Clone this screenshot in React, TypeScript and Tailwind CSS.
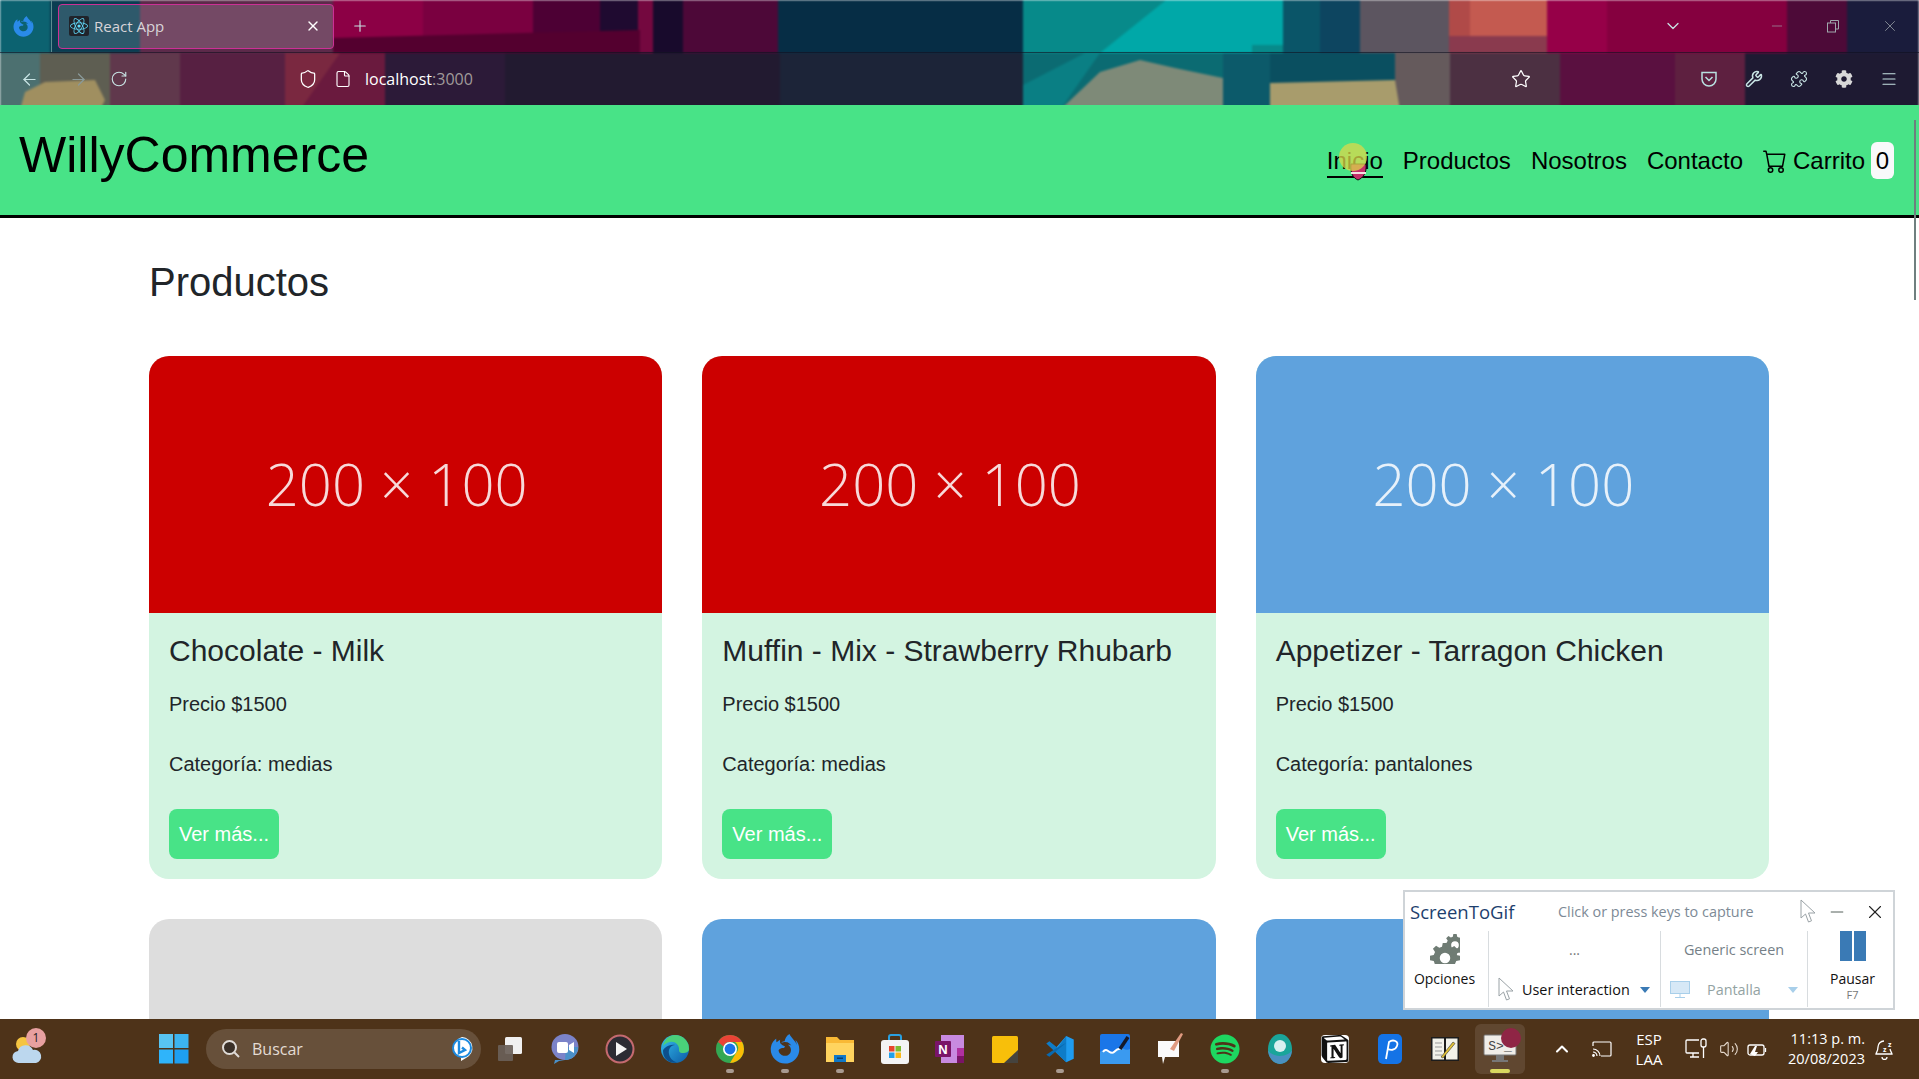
import { useId } from "react";
import { FaReact, FaCog, FaSpotify, FaFirefoxBrowser } from "react-icons/fa";
import { BsCart } from "react-icons/bs";
import { SiNotion } from "react-icons/si";
import {
  ArrowLeft,
  ArrowRight,
  ChevronDown,
  ChevronUp,
  File,
  Menu,
  Minus,
  Plus,
  RotateCw,
  Shield,
  Star,
  Volume2,
  Wrench,
  X,
  Puzzle,
} from "lucide-react";

type Product = { title: string; category: string; color: string };

const PRODUCTS: Product[] = [
  { title: "Chocolate - Milk", category: "medias", color: "bg-[#cc0000]" },
  { title: "Muffin - Mix - Strawberry Rhubarb", category: "medias", color: "bg-[#cc0000]" },
  { title: "Appetizer - Tarragon Chicken", category: "pantalones", color: "bg-[#5fa2dd]" },
];

const NEXT_ROW = ["bg-[#dddddd]", "bg-[#5fa2dd]", "bg-[#5fa2dd]"];

// Wallpaper behind the browser chrome, blocked out by hand: [x, y, w, h, colour]
const PAINT: [number, number, number, number, string][] = [
  [0, 0, 50, 53, "#0c6270"],
  [50, 0, 90, 53, "#0a3d52"],
  [140, 0, 200, 53, "#5c2a4a"],
  [333, 0, 90, 53, "#8c0045"],
  [423, 0, 110, 53, "#7a0040"],
  [533, 0, 100, 53, "#4d0034"],
  [600, 0, 40, 53, "#1f0a30"],
  [638, 0, 15, 53, "#74083f"],
  [653, 0, 30, 53, "#180a2c"],
  [683, 0, 95, 53, "#4d0838"],
  [778, 0, 245, 53, "#062d45"],
  [1023, 0, 260, 53, "#078a8a"],
  [1283, 0, 37, 53, "#0a5568"],
  [1320, 0, 40, 53, "#0d4560"],
  [1360, 0, 90, 53, "#5c5560"],
  [1449, 36, 98, 17, "#8a3a4e"],
  [1449, 0, 98, 36, "#c45a50"],
  [1547, 0, 60, 53, "#960048"],
  [1607, 0, 180, 53, "#85003f"],
  [1787, 0, 60, 53, "#4d0a38"],
  [1847, 0, 72, 53, "#1a1c3c"],
  [0, 53, 40, 57, "#4c7070"],
  [40, 53, 70, 57, "#5e5e52"],
  [110, 53, 70, 57, "#60384c"],
  [180, 53, 105, 57, "#572042"],
  [285, 53, 100, 57, "#6a1a3e"],
  [385, 53, 120, 57, "#2c1a38"],
  [505, 53, 275, 57, "#221a30"],
  [780, 53, 243, 57, "#1c2438"],
  [1023, 53, 200, 57, "#0b6b72"],
  [1223, 53, 47, 57, "#0c5a6a"],
  [1270, 53, 125, 30, "#0a4f60"],
  [1395, 53, 55, 57, "#655a5c"],
  [1450, 53, 110, 57, "#4c3042"],
  [1560, 53, 115, 57, "#5a1040"],
  [1675, 53, 70, 57, "#5e2040"],
  [1745, 53, 174, 57, "#1e1a32"],
];

// Irregular strokes laid over the blocks: [points, colour]
const STROKES: [string, string][] = [
  ["1100,53 1166,0 1283,0 1283,45 1252,45 1252,53", "#00a8a8"],
  ["1060,110 1100,72 1140,60 1175,68 1223,78 1223,110", "#7e8a78"],
  ["1023,110 1023,85 1085,53 1100,53 1060,110", "#0a7f84"],
  ["1270,83 1395,80 1400,110 1270,110", "#a89c6c"],
  ["25,92 45,82 95,80 105,100 100,110 20,110", "#a08f60"],
  ["333,38 640,30 640,53 333,53", "#54002f"],
  ["1449,0 1470,0 1470,36 1449,36", "#b04a48"],
  ["285,53 340,53 300,110 285,110", "#7a2840"],
];

function Wallpaper() {
  return (
    <svg className="absolute left-0 top-0 blur-[1px]" width="1919" height="110" viewBox="0 0 1919 110">
      {PAINT.map(([x, y, w, h, c], i) => (
        <rect key={i} x={x} y={y} width={w} height={h} fill={c} />
      ))}
      {STROKES.map(([points, c], i) => (
        <polygon key={i} points={points} fill={c} />
      ))}
    </svg>
  );
}

function ProductCard({ product }: { product: Product }) {
  return (
    <div className="overflow-hidden rounded-[20px] bg-[#d3f4e1]">
      <div className={`flex h-[257px] items-center justify-center pb-[2px] pr-[18px] ${product.color}`}>
        <span className="font-['Open_Sans'] text-[58px] font-light text-white/85">200 × 100</span>
      </div>
      <div className="p-5">
        <h4 className="mb-[20px] text-[30px] leading-[36px] text-[#212529]">{product.title}</h4>
        <p className="mb-[30px] text-[20px] leading-[30px] text-[#212529]">Precio $1500</p>
        <p className="mb-[30px] text-[20px] leading-[30px] text-[#212529]">Categoría: {product.category}</p>
        <button className="h-[50px] w-[110px] rounded-[8px] bg-[#48e387] text-[20px] text-white">Ver más...</button>
      </div>
    </div>
  );
}

function Navbar() {
  return (
    <nav className="flex h-[113px] items-center justify-between border-b-[3px] border-black bg-[#48e387] pl-[19px] pr-[25px] text-black">
      <span className="mb-[10px] text-[50px] leading-[60px]">WillyCommerce</span>
      <div className="mt-[1px] flex items-center gap-5 text-[24px] leading-[36px]">
        <a className="mt-[2px] border-b-2 border-black leading-[30px]">Inicio</a>
        <a>Productos</a>
        <a>Nosotros</a>
        <a>Contacto</a>
        <a className="flex items-center">
          <BsCart className="mr-[6px] h-[24px] w-[24px]" />
          Carrito
          <span className="ml-[6px] flex h-[37px] w-[23px] items-center justify-center rounded-[6px] bg-[#f8f9fa]">0</span>
        </a>
      </div>
    </nav>
  );
}

function BrowserChrome() {
  const icon = "text-[#c8e4e4]";
  return (
    <header className="relative h-[105px] shrink-0 overflow-hidden font-['Open_Sans']">
      <Wallpaper />
      <div className="relative flex h-[53px] items-center border-b border-[#10101f]/60">
        <div className="flex h-full w-[52px] items-center justify-center border-r border-[#5c8c90] pr-[5px]">
          <FaFirefoxBrowser className="h-[21px] w-[21px] text-[#2a8ae8]" />
        </div>
        <div className="ml-[6px] flex h-[45px] w-[276px] items-center rounded-[4px] border border-[#cc3096] bg-white/15 pl-[10px] pr-[12px]">
          <span className="flex h-[20px] w-[20px] items-center justify-center rounded-[2px] bg-[#20232a]">
            <FaReact className="h-[18px] w-[18px] text-[#61dafb]" />
          </span>
          <span className="ml-[5px] flex-1 text-[15px] text-[#d8d4d8]">React App</span>
          <X className="h-[16px] w-[16px] text-white" strokeWidth={2} />
        </div>
        <Plus className={`ml-[17px] h-[18px] w-[18px] ${icon}`} strokeWidth={1.5} />
        <ChevronDown className={`ml-[1294px] h-[20px] w-[20px] ${icon}`} strokeWidth={1.5} />
        <Minus className="ml-[86px] h-[16px] w-[16px] text-[#a0a8ac]" strokeWidth={1} />
        <svg className="ml-[41px]" width="14" height="14" viewBox="0 0 14 14" fill="none" stroke="#a0a8ac">
          <rect x="1.5" y="4" width="8" height="9" />
          <path d="M4.5 4V1.5h8V10H9.5" />
        </svg>
        <X className="ml-[41px] h-[18px] w-[18px] text-[#a0a8ac]" strokeWidth={1} />
      </div>
      <div className="relative flex h-[52px] items-center">
        <ArrowLeft className={`ml-[20px] h-[19px] w-[19px] ${icon}`} strokeWidth={1.5} />
        <ArrowRight className="ml-[30px] h-[19px] w-[19px] text-[#8a9a9a]" strokeWidth={1.5} />
        <RotateCw className={`ml-[22px] h-[18px] w-[18px] ${icon}`} strokeWidth={1.5} />
        <Shield className="ml-[170px] h-[20px] w-[20px] text-white" strokeWidth={1.5} />
        <File className="ml-[16px] h-[18px] w-[18px] text-white" strokeWidth={1.5} />
        <span className="ml-[13px] text-[16px] text-white">
          localhost<span className="text-[#a09a9a]">:3000</span>
        </span>
        <Star className="ml-[1038px] h-[20px] w-[20px] text-white" strokeWidth={1.5} />
        <svg className="ml-[169px]" width="18" height="18" viewBox="0 0 18 18" fill="none" stroke="#b8e0e0" strokeWidth="1.5">
          <path d="M2 2.5h14V9a7 7 0 0 1-14 0z" />
          <path d="M5.5 7 9 10.5 12.5 7" />
        </svg>
        <Wrench className="ml-[27px] h-[18px] w-[18px] text-[#c8e4e4]" strokeWidth={2} />
        <Puzzle className={`ml-[27px] h-[18px] w-[18px] ${icon}`} strokeWidth={1.5} />
        <FaCog className="ml-[27px] h-[18px] w-[18px] text-[#d8d8d8]" />
        <Menu className={`ml-[27px] h-[18px] w-[18px] ${icon}`} strokeWidth={1.5} />
      </div>
    </header>
  );
}

function Cell({ children, dot }: { children: React.ReactNode; dot?: boolean }) {
  return (
    <div className="relative flex h-[59px] w-[55px] items-center justify-center">
      {children}
      {dot && <span className="absolute bottom-[6px] h-[4px] w-[8px] rounded-full bg-[#a89a90]" />}
    </div>
  );
}

function ChromeIcon() {
  return (
    <svg width="30" height="30" viewBox="0 0 30 30">
      <circle cx="15" cy="15" r="14" fill="#34a853" />
      <path d="M15 1a14 14 0 0 1 12.1 7H15a7 7 0 0 0-6.5 4.4L3 8A14 14 0 0 1 15 1z" fill="#ea4335" />
      <path d="M27.1 8A14 14 0 0 1 15 29l6-10a7 7 0 0 0-1-11z" fill="#fbbc05" />
      <circle cx="15" cy="15" r="7" fill="#fff" />
      <circle cx="15" cy="15" r="5.4" fill="#1a73e8" />
    </svg>
  );
}

function EdgeIcon() {
  const id = useId();
  return (
    <svg width="30" height="30" viewBox="0 0 30 30">
      <defs>
        <linearGradient id={id} x1="0" y1="0" x2="1" y2="1">
          <stop offset="0" stopColor="#35c1f1" />
          <stop offset="1" stopColor="#0c59a4" />
        </linearGradient>
      </defs>
      <circle cx="15" cy="15" r="14" fill={`url(#${id})`} />
      <path d="M15 1a14 14 0 0 1 14 14c0 3-3 4-6 4-4 0-4-2-4-4 0-4-4-8-9-7-3 .5-5 2-7 4C4 6 9 1 15 1z" fill="#4ad07a" />
      <path d="M15 11c-4 0-7 4-6 9 .6 3.500 3 7 8 8.500C11 30 3 26 3 17c0-2 5-7 12-6z" fill="#0c4f8c" />
    </svg>
  );
}

function TaskbarIcons() {
  return (
    <>
      <Cell>
        <svg width="26" height="26" viewBox="0 0 26 26">
          <rect x="8" y="1" width="17" height="17" rx="1.500" fill="#f0f0f0" />
          <rect x="1" y="9" width="15" height="16" rx="1" fill="#6a6058" opacity="0.92" />
        </svg>
      </Cell>
      <Cell>
        <svg width="28" height="30" viewBox="0 0 28 30">
          <ellipse cx="14" cy="13" rx="13.500" ry="13" fill="#7b83c9" />
          <path d="M14 26h-10l-1 4 5-3z" fill="#4a90c8" />
          <path d="M14 26a13 13 0 0 0 13-13H15z" fill="#4a90c8" />
          <rect x="6" y="8" width="11" height="11" rx="2" fill="#fff" />
          <path d="M18 11l5-3v11l-5-3z" fill="#fff" />
        </svg>
      </Cell>
      <Cell>
        <svg width="30" height="30" viewBox="0 0 30 30">
          <circle cx="15" cy="15" r="13.500" fill="#2b2b33" stroke="#c56a70" strokeWidth="2" />
          <path d="M11 8l11 7-11 7z" fill="#f4f4f4" />
        </svg>
      </Cell>
      <Cell>
        <EdgeIcon />
      </Cell>
      <Cell dot>
        <ChromeIcon />
      </Cell>
      <Cell dot>
        <FaFirefoxBrowser className="h-[30px] w-[30px] text-[#2a8ae8]" />
      </Cell>
      <Cell dot>
        <svg width="30" height="30" viewBox="0 0 30 30">
          <path d="M1 3h11l3 3h14v22H1z" fill="#f9b935" />
          <path d="M1 9h28v19H1z" fill="#ffd45f" />
          <rect x="9" y="21" width="12" height="7" fill="#0f78c8" />
          <rect x="12" y="23.500" width="6" height="1.500" fill="#083d70" />
        </svg>
      </Cell>
      <Cell>
        <svg width="28" height="30" viewBox="0 0 28 30">
          <path d="M8 8V3a2 2 0 0 1 2-2h8a2 2 0 0 1 2 2v5" fill="none" stroke="#2aa0e0" strokeWidth="2" />
          <rect x="0" y="6" width="28" height="24" rx="3" fill="#f4f4f4" />
          <rect x="8" y="12" width="5.500" height="5.500" fill="#e8452c" />
          <rect x="14.500" y="12" width="5.500" height="5.500" fill="#7dba30" />
          <rect x="8" y="18.500" width="5.500" height="5.500" fill="#22a0e8" />
          <rect x="14.500" y="18.500" width="5.500" height="5.500" fill="#fab818" />
        </svg>
      </Cell>
      <Cell>
        <svg width="30" height="30" viewBox="0 0 30 30">
          <rect x="6" y="1" width="23" height="28" fill="#c88ae0" />
          <rect x="22" y="14" width="7" height="8" fill="#b030a0" />
          <rect x="22" y="22" width="7" height="7" fill="#7a1468" />
          <rect x="0" y="7" width="16" height="16" rx="1" fill="#7a1468" />
          <text x="8" y="19.500" textAnchor="middle" fontFamily="Liberation Sans" fontWeight="700" fontSize="13" fill="#fff">N</text>
        </svg>
      </Cell>
      <Cell>
        <svg width="26" height="27" viewBox="0 0 26 27">
          <rect width="26" height="27" rx="1.500" fill="#f8bf0a" />
          <path d="M26 14v13H12z" fill="#45433e" />
        </svg>
      </Cell>
      <Cell dot>
        <svg width="30" height="30" viewBox="0 0 24 24">
          <path d="M17 1.500 23 4.300v15.400L17 22.500 7 13z" fill="#1f9cf0" />
          <path d="M17 1.500v21L1 7.500 3.500 5.800 10 11z" fill="#0e7cc8" />
          <path d="M17 7 8 12 1 16.500l2.500 1.700L17 7z" fill="#0a6ab0" />
        </svg>
      </Cell>
      <Cell>
        <svg width="30" height="30" viewBox="0 0 30 30">
          <rect width="30" height="30" rx="2" fill="#1a76e8" />
          <path d="M0 18c6-6 9 4 15-2s9 2 15-1v15H0z" fill="#3a9af0" />
          <path d="M3 18c4-6 7 4 11 0s6-3 8-4" fill="none" stroke="#fff" strokeWidth="2" />
          <path d="M20 15 28 3" stroke="#14182a" strokeWidth="3.500" />
        </svg>
      </Cell>
      <Cell>
        <svg width="28" height="34" viewBox="0 0 28 34">
          <path d="M2 9h21v16H9l-2 7-1-7H2z" fill="#fafafa" />
          <path d="M14 17 25 1l2 1-9 17z" fill="#e09a80" />
        </svg>
      </Cell>
      <Cell dot>
        <FaSpotify className="h-[30px] w-[30px] text-[#1ed760]" />
      </Cell>
      <Cell>
        <svg width="24" height="30" viewBox="0 0 24 30">
          <ellipse cx="12" cy="15" rx="12" ry="15" fill="#1aa59a" />
          <path d="M12 22c5 0 12-3 12-7a12 15 0 0 1-24 0c0 4 7 7 12 7z" fill="#4a90c0" />
          <circle cx="12" cy="12" r="6" fill="#d8f0f0" />
        </svg>
      </Cell>
      <Cell>
        <SiNotion className="h-[28px] w-[28px] rounded-[4px] bg-white text-[#111]" />
      </Cell>
      <Cell>
        <svg width="24" height="30" viewBox="0 0 24 30">
          <rect width="24" height="30" rx="5" fill="#1473e6" />
          <path d="M8 25 11 8c4-3 10-1 8 4s-7 4-9 3" fill="none" stroke="#fff" strokeWidth="1.800" />
        </svg>
      </Cell>
      <Cell>
        <svg width="28" height="24" viewBox="0 0 28 24">
          <rect width="28" height="24" fill="#1c1c1c" />
          <rect x="1.500" y="1.500" width="11.500" height="21" fill="#f2f2ea" />
          <rect x="15" y="1.500" width="11.500" height="21" fill="#f2f2ea" />
          <path d="M4 6h7M4 10h7M4 14h7M4 18h7" stroke="#999" />
          <path d="M10 20 22 5l2 1.500L12 21z" fill="#e2c238" stroke="#333" strokeWidth=".6" />
        </svg>
      </Cell>
    </>
  );
}

function Taskbar() {
  return (
    <footer className="flex h-[60px] shrink-0 items-center bg-[#4e3319] font-['Open_Sans'] text-white">
      <div className="relative ml-[12px] flex h-[40px] w-[32px] items-center justify-center">
        <svg width="32" height="30" viewBox="0 0 32 30">
          <circle cx="11" cy="10" r="7" fill="#f5c542" />
          <path d="M7 29a6 6 0 0 1-1-12 8 8 0 0 1 15-1 6.500 6.500 0 0 1 3 13z" fill="#bcd7ee" />
        </svg>
        <span className="absolute left-[14px] top-[-1px] flex h-[20px] w-[20px] items-center justify-center rounded-full bg-[#e8a0a0] text-[12px] text-[#222]">1</span>
      </div>
      <svg className="ml-[115px]" width="30" height="30" viewBox="0 0 30 30">
        <rect x="0" y="0" width="14" height="14" fill="#58c4f2" />
        <rect x="15.500" y="0" width="14" height="14" fill="#3cb4f0" />
        <rect x="0" y="15.500" width="14" height="14" fill="#2fb4fa" />
        <rect x="15.500" y="15.500" width="14" height="14" fill="#1e9ff0" />
      </svg>
      <div className="ml-[17px] flex h-[40px] w-[275px] items-center rounded-full bg-[#67503a] pl-[15px] pr-[7px]">
        <svg width="20" height="20" viewBox="0 0 20 20" fill="none" stroke="#e0dcd8" strokeWidth="2">
          <circle cx="8.500" cy="8.500" r="6.500" fill="#3a3028" />
          <path d="M13.500 13.500 18 18" />
        </svg>
        <span className="ml-[11px] flex-1 text-[16px] text-[#e4dcd4]">Buscar</span>
        <svg width="24" height="26" viewBox="0 0 24 26">
          <path d="M12 1a11 11 0 0 1 4 21l-5 3v-3.500A11 11 0 0 1 12 1z" fill="#fff" />
          <circle cx="12" cy="12" r="9" fill="#fff" stroke="#1c8ae0" strokeWidth="2" />
          <path d="M9 5v12l6-3-3-2.500" fill="none" stroke="#1c8ae0" strokeWidth="2.400" />
        </svg>
      </div>
      <div className="ml-[1px] flex items-center">
        <TaskbarIcons />
      </div>
      <div className="relative ml-[3px] flex h-[50px] w-[50px] items-center justify-center rounded-[6px] bg-white/10">
        <svg width="34" height="32" viewBox="0 0 34 32">
          <rect x="1" y="2" width="32" height="20" rx="1" fill="#f0ede8" stroke="#777" />
          <rect x="13" y="22" width="8" height="5" fill="#777" />
          <rect x="9" y="27" width="16" height="2" fill="#777" />
          <text x="17" y="17" textAnchor="middle" fontFamily="Liberation Mono" fontSize="13" fill="#444">S&gt;_</text>
        </svg>
        <span className="absolute right-[4px] top-[4px] h-[20px] w-[20px] rounded-full bg-[#8f2545]" />
        <span className="absolute bottom-[1px] h-[4px] w-[20px] rounded-full bg-[#d8d860]" />
      </div>
      <ChevronUp className="ml-[27px] h-[20px] w-[20px] text-white" strokeWidth={2.5} />
      <svg className="ml-[20px]" width="20" height="16" viewBox="0 0 20 16" fill="none" stroke="#fff" strokeWidth="1.200">
        <path d="M1 5V2a1 1 0 0 1 1-1h16a1 1 0 0 1 1 1v12a1 1 0 0 1-1 1H9" />
        <path d="M1 8a7 7 0 0 1 7 7M1 11a4 4 0 0 1 4 4" />
        <circle cx="1.500" cy="14.500" r=".8" fill="#fff" />
      </svg>
      <div className="ml-[21px] flex w-[32px] flex-col items-center text-[15px] leading-[20px]">
        <span>ESP</span>
        <span>LAA</span>
      </div>
      <svg className="ml-[20px]" width="22" height="22" viewBox="0 0 22 22" fill="none" stroke="#fff" strokeWidth="1.300">
        <path d="M14 15H2a1 1 0 0 1-1-1V3a1 1 0 0 1 1-1h12" />
        <path d="M5 19h9M8 15v4" />
        <rect x="16" y="1" width="5" height="8" rx="2" />
        <path d="M18.500 9v11" />
      </svg>
      <Volume2 className="ml-[12px] h-[20px] w-[20px] text-[#e8dcd0]" strokeWidth={1.3} />
      <svg className="ml-[8px]" width="20" height="16" viewBox="0 0 20 16" fill="none" stroke="#fff" strokeWidth="1.300">
        <rect x="1" y="4" width="16" height="10" rx="2" />
        <path d="M18.500 7v4" />
        <path d="M3 13 8 5h2l-2 6h3l-3 4z" fill="#fff" stroke="none" />
      </svg>
      <div className="ml-[12px] flex w-[86px] flex-col items-end text-[14.5px] leading-[20px]">
        <span>11:13 p. m.</span>
        <span>20/08/2023</span>
      </div>
      <svg className="ml-[10px]" width="20" height="22" viewBox="0 0 20 22" fill="none" stroke="#fff" strokeWidth="1.300">
        <path d="M9 3a6 6 0 0 0-6 6c0 4-2 6-2 7h16c0-1-1.500-2.500-2-5" />
        <path d="M7 19a2.500 2.500 0 0 0 5 0" />
        <text x="13" y="9" fontFamily="Open Sans" fontSize="7" fontWeight="700" fill="#fff" stroke="none">z</text>
        <text x="8" y="14" fontFamily="Open Sans" fontSize="7" fontWeight="700" fill="#fff" stroke="none">z</text>
      </svg>
    </footer>
  );
}

function ScreenToGif() {
  return (
    <aside className="absolute left-[1403px] top-[890px] h-[120px] w-[492px] border-2 border-[#cfd4d8] bg-white font-['Open_Sans']">
      <div className="flex h-[39px] items-center pl-[5px]">
        <span className="w-[148px] text-[18.5px] text-[#1d3f6e]">ScreenToGif</span>
        <span className="w-[242px] text-[14.4px] text-[#7d8a96]">Click or press keys to capture</span>
        <CursorGlyph />
        <Minus className="ml-[11px] h-[20px] w-[20px] text-[#55605a]" strokeWidth={1.2} />
        <X className="ml-[17px] h-[22px] w-[22px] text-[#222]" strokeWidth={1.2} />
      </div>
      <div className="flex h-[76px]">
        <div className="flex w-[84px] flex-col items-center border-r border-[#d8dcdf] pr-[4px] pt-[3px]">
          <svg width="30" height="30" viewBox="0 0 30 30" fill="#6f7c74">
            <g transform="translate(0 9) scale(.75)"><GearShape /></g>
            <g transform="translate(14 0) scale(.55)"><GearShape /></g>
          </svg>
          <span className="mt-[5px] text-[14px] leading-[20px] text-[#111]">Opciones</span>
        </div>
        <div className="flex w-[172px] flex-col border-r border-[#d8dcdf]">
          <span className="h-[46px] pt-[8px] text-center text-[14px] text-[#777]">...</span>
          <div className="flex items-center pl-[9px]">
            <CursorGlyph />
            <span className="ml-[8px] w-[118px] text-[14.4px] text-[#111]">User interaction</span>
            <span className="h-0 w-0 border-x-[5px] border-t-[6px] border-x-transparent border-t-[#3a7ab5]" />
          </div>
        </div>
        <div className="flex w-[147px] flex-col border-r border-[#d8dcdf]">
          <span className="h-[46px] pt-[8px] text-center text-[14.4px] text-[#757f87]">Generic screen</span>
          <div className="flex h-[25px] items-center pl-[9px]">
            <svg width="20" height="18" viewBox="0 0 20 18" fill="#d6e8f6" stroke="#a8cfea">
              <rect x=".5" y=".5" width="19" height="12" />
              <path d="M10 13v3M5 16.500h10" fill="none" />
            </svg>
            <span className="ml-[17px] w-[81px] text-[14.4px] text-[#93a3a3]">Pantalla</span>
            <span className="h-0 w-0 border-x-[5px] border-t-[6px] border-x-transparent border-t-[#a8cfea]" />
          </div>
        </div>
        <div className="flex flex-1 flex-col items-center pl-[4px]">
          <div className="flex h-[30px] gap-[2px]">
            <span className="h-full w-[12px] bg-[#3a7ab5]" />
            <span className="h-full w-[12px] bg-[#3a7ab5]" />
          </div>
          <span className="mt-[8px] text-[14px] leading-[20px] text-[#111]">Pausar</span>
          <span className="text-[11px] leading-[12px] text-[#777]">F7</span>
        </div>
      </div>
    </aside>
  );
}

function GearShape() {
  return (
    <path d="M17 0h6l1 5 4 1.700 4.300-2.800 4.200 4.200-2.800 4.300L35 16l5 1v6l-5 1-1.700 4 2.800 4.300-4.200 4.200-4.300-2.800L24 35l-1 5h-6l-1-5-4-1.700-4.300 2.800-4.200-4.200 2.800-4.300L5 24l-5-1v-6l5-1 1.700-4-2.800-4.300 4.200-4.200 4.300 2.800L16 5zM20 13a7 7 0 1 0 0 14 7 7 0 0 0 0-14z" fillRule="evenodd" />
  );
}

function CursorGlyph() {
  return (
    <svg width="16" height="25" viewBox="0 0 16 25" fill="#fff" stroke="#9aa2a6">
      <path d="M1 1v18l4.500-4 3 8 3-1.200-3-7.800H15z" />
    </svg>
  );
}

export default function App() {
  return (
    <div className="relative flex h-[1079px] w-[1919px] flex-col overflow-hidden bg-white font-['Liberation_Sans',Arial,sans-serif]">
      <BrowserChrome />
      <Navbar />
      <main className="min-h-0 flex-1 overflow-hidden pl-[149px] pr-[150px] pt-[40px]">
        <h2 className="mb-[50px] text-[40px] leading-[48px] text-[#212529]">Productos</h2>
        <div className="grid grid-cols-3 gap-x-[40px] gap-y-[40px]">
          {PRODUCTS.map((product) => (
            <ProductCard key={product.title} product={product} />
          ))}
          {NEXT_ROW.map((color, i) => (
            <div key={i} className={`h-[257px] rounded-t-[20px] ${color}`} />
          ))}
        </div>
      </main>
      <Taskbar />

      {/* overlays: scrollbar thumb, recorder's click marker, capture window */}
      <span className="absolute left-[1914px] top-[120px] h-[180px] w-[2px] bg-[#6f7f7f]" />
      <svg className="absolute left-[1338px] top-[143px]" width="36" height="40" viewBox="0 0 36 40">
        <path d="M20 37c-5-2-8-7-7-16h15c1 9-3 14-8 16z" fill="#c4306a" stroke="#111" />
        <rect x="13" y="29" width="15" height="2" fill="#f4e0e0" />
        <circle cx="15" cy="14" r="14" fill="#dcd84a" opacity="0.75" />
      </svg>
      <ScreenToGif />
    </div>
  );
}
